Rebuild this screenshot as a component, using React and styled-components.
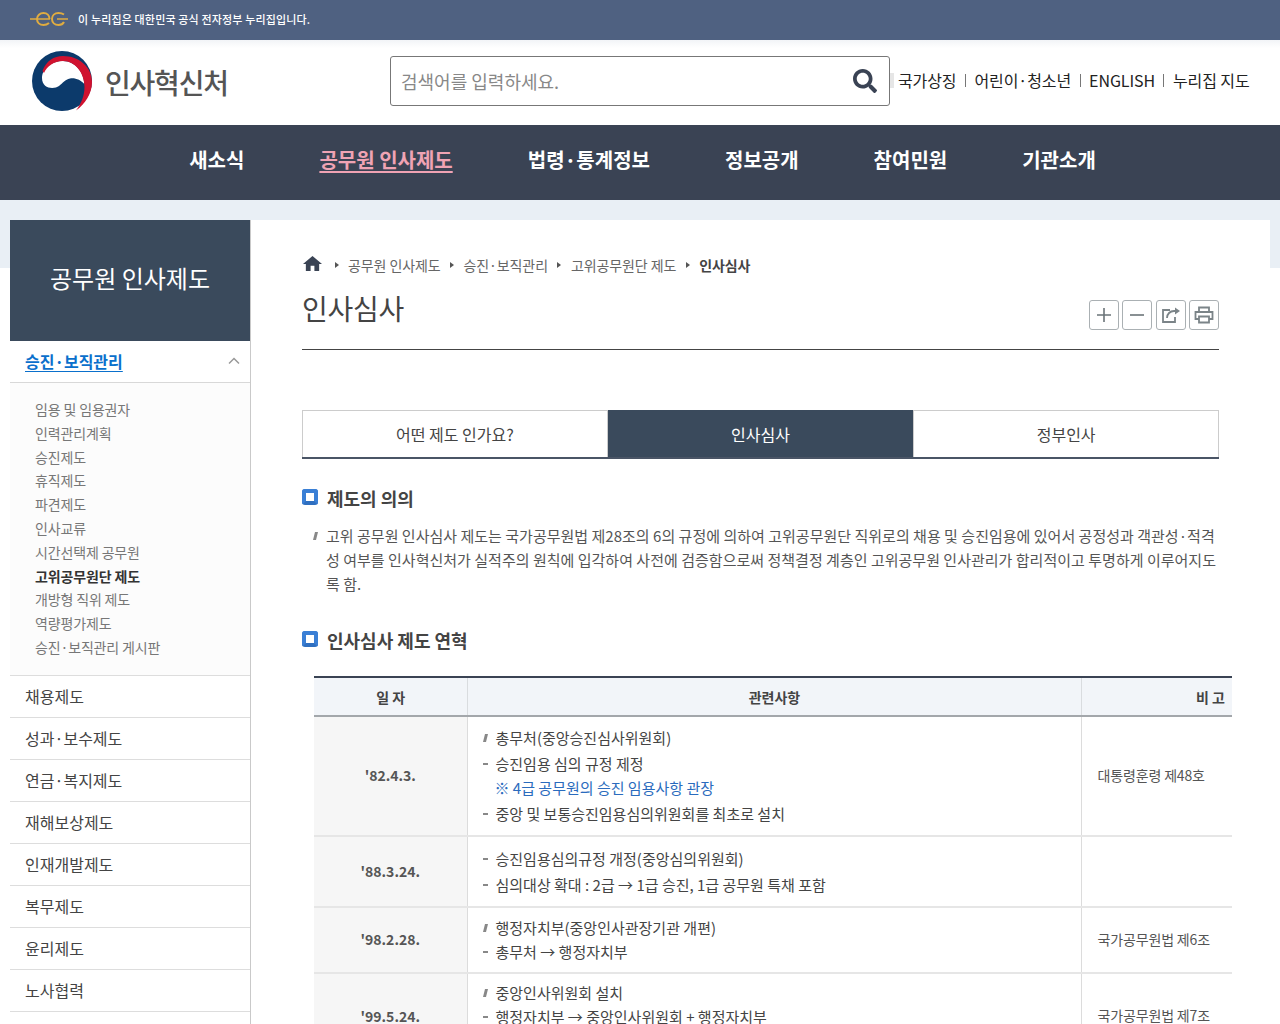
import React from "react";
import styled, { createGlobalStyle } from "styled-components";
import { FaSearch } from "react-icons/fa";

const Global = createGlobalStyle`
  html, body { margin: 0; padding: 0; background: #fff; }
  *, *::before, *::after { box-sizing: border-box; }
  body { font-family: "Noto Sans CJK KR", "Noto Sans", sans-serif; color: #444; overflow: hidden; }
  ul { list-style: none; margin: 0; padding: 0; }
`;

const Page = styled.div`width: 1280px; height: 1024px; overflow: hidden;`;
const TopBar = styled.div`
  height: 40px; background: #4f6181; display: flex; align-items: center; padding: 0 0 2px 30px; gap: 10px;
  color: #fff; font-size: 11px; font-weight: 500; letter-spacing: 0.15px;
`;
const Header = styled.header`
  height: 85px; display: flex; align-items: center; padding: 0 0 4px 32px;
  background: linear-gradient(#f2f4f7 0, #fff 8px);
`;
const Brand = styled.div`display: flex; align-items: center; gap: 13px; width: 358px; margin-top: 1px;`;
const BrandName = styled.span`font-size: 28px; font-weight: 500; color: #555; letter-spacing: -1.2px; line-height: 1; margin-top: 2px;`;
const Search = styled.div`
  width: 500px; height: 50px; border: 1px solid #777; border-radius: 3px; display: flex; align-items: center;
  justify-content: space-between; padding: 0 12px 0 10px; font-size: 18px; color: #888; background: #fff;
`;
const Ghost = styled.span`width: 4px; height: 15px; background: #e6e6e6; margin-right: 4px;`;
const Utility = styled.ul`display: flex; align-items: center; font-size: 16px; color: #222; margin-top: -1px;`;
const UtilItem = styled.li`
  display: flex; align-items: center; letter-spacing: -0.1px;
  & + &::before { content: ""; width: 1px; height: 13px; background: #777; margin: 0 8.5px; }
`;
const Nav = styled.nav`
  height: 75px; background: #3a4354; display: flex; align-items: center; justify-content: center; gap: 75px; padding: 0 0 7px 5px;
`;
const NavItem = styled.a`
  font-size: 20px; font-weight: 700; color: ${p => (p.$active ? "#f0a3b4" : "#fff")};
  text-decoration: ${p => (p.$active ? "underline" : "none")}; text-underline-offset: 3px;
`;
const Body = styled.div`
  display: flex; padding: 20px 10px 0; height: 824px;
  background: linear-gradient(#e9eff5 0, #e9eff5 68px, #fff 68px);
`;
const Side = styled.aside`width: 241px; border-right: 1px solid #c9c9c9; background: #fff; flex: none;`;
const SideTitle = styled.div`
  height: 121px; background: #3a4a5c; color: #fff; font-size: 24px; display: flex; align-items: center; justify-content: center; padding-bottom: 6px;
`;
const SideCurrent = styled.div`
  height: 42px; display: flex; align-items: center; justify-content: space-between; padding: 0 10px 2px 15px;
  border-bottom: 1px solid #d8d8d8; color: #0a70cc; font-weight: 700; font-size: 16px; text-decoration: underline;
  text-underline-offset: 3px;
`;
const SubList = styled.ul`background: #fcfcfc; padding: 15px 0 15px 25px; border-bottom: 1px solid #ddd;`;
const SubItem = styled.li`
  font-size: 14px; line-height: 23.8px; color: ${p => (p.$active ? "#333" : "#777")}; font-weight: ${p => (p.$active ? 700 : 400)}; letter-spacing: -0.15px;
`;
const SideRow = styled.div`
  height: 42px; border-bottom: 1px solid #ddd; display: flex; align-items: center; padding-left: 15px; font-size: 16px; color: #444;
`;
const Content = styled.main`width: 1019px; flex: none; background: #fff; padding: 31px 51px 0 51px;`;
const Crumbs = styled.div`display: flex; align-items: center; height: 28px; font-size: 14px; color: #666; letter-spacing: -0.1px;`;
const HomeIcon = styled.svg`width: 19px; height: 15px; fill: #3a4354; margin: -3px 3px 0 1px; flex: none;`;
const Crumb = styled.span`
  font-weight: ${p => (p.$last ? 700 : 400)}; color: ${p => (p.$last ? "#444" : "#666")};
`;
const Arrow = styled.i`
  width: 0; height: 0; border-left: 4px solid #555; border-top: 3px solid transparent; border-bottom: 3px solid transparent; margin: 0 9.5px;
`;
const TitleRow = styled.div`
  height: 71px; border-bottom: 1px solid #444; display: flex; justify-content: space-between; padding-top: 9px;
`;
const PageTitle = styled.h1`margin: 0; font-size: 28px; font-weight: 400; color: #444; line-height: 40px; letter-spacing: -0.3px;`;
const Tools = styled.div`display: flex; gap: 3.3px; margin-top: 12px;`;
const Tool = styled.button`
  width: 30px; height: 30px; padding: 0; border: 1px solid #aab0b3; border-radius: 3px; background: #fff; display: flex; align-items: center; justify-content: center;
`;
const Tabs = styled.div`display: grid; grid-template-columns: repeat(3, 1fr); margin-top: 60px; height: 49px; border-bottom: 2px solid #4a5566;`;
const Tab = styled.div`
  display: flex; align-items: center; justify-content: center; font-size: 16px;
  background: ${p => (p.$active ? "#3a4a5c" : "#fff")}; color: ${p => (p.$active ? "#fff" : "#444")};
  border: 1px solid ${p => (p.$active ? "#3a4a5c" : "#ccc")}; border-bottom: 0;
`;
const Heading = styled.h2`
  margin: ${p => p.$top}px 0 0; display: flex; align-items: center; gap: 9px; font-size: 18px; font-weight: 700; color: #444; line-height: 28px;
  &::before { content: ""; width: 16px; height: 16px; border: 4px solid #3a7fd5; border-bottom-color: #2f6fc0; border-radius: 3px; background: #fff; margin-top: -2px; }
`;
const Para = styled.p`
  margin: 12px 0 0; padding: 0 0 0 24px; font-size: 15px; line-height: 24px; color: #555; position: relative; width: 917px; letter-spacing: 0.015px;
  &::before { content: ""; position: absolute; left: 12px; top: 8px; width: 3px; height: 8px; background: #888; transform: skewX(-14deg); }
`;
const TableWrap = styled.div`margin: 22px 0 0 12px; width: 918px; overflow: hidden;`;
const Table = styled.table`width: 1025px; table-layout: fixed; border-collapse: collapse; border-top: 2px solid #3a4354;`;
const Th = styled.th`
  height: 39px; background: #f2f5f9; font-size: 14px; font-weight: 700; color: #444; border-bottom: 2px solid #a3a7ab; border-right: 1px solid #d9dcdf; padding: 0 0 0 1px;
`;
const Tr = styled.tr`height: ${p => p.$h}px; border-bottom: 2px solid #e6e6e6;`;
const DateCell = styled.td`
  background: #f6f6f6; text-align: center; font-size: 14px; font-weight: 700; color: #555; border-right: 1px solid #dcdcdc; padding: ${p => p.$pad || "0 0 2px"};
`;
const Detail = styled.td`
  border-right: 1px solid #dcdcdc; padding: ${p => p.$pad || 0}px 0 0 14px; vertical-align: ${p => (p.$pad ? "top" : "middle")};
`;
const Note = styled.td`font-size: 14px; color: #555; padding: 0 0 2px 16px; letter-spacing: -0.15px;`;
const Item = styled.li`
  position: relative; padding-left: 14px; font-size: 15px; line-height: 24px; color: #444; margin-top: ${p => p.$gap || 0}px;
  &::before {
    content: ""; position: absolute; left: 1px; background: #888;
    ${p => (p.$slash ? "top: 8px; width: 3px; height: 8px; left: 2px; transform: skewX(-14deg);" : "top: 11px; width: 5px; height: 2px;")}
  }
`;
const Remark = styled.div`padding-left: 13px; font-size: 15px; line-height: 24px; color: #2a6bbd;`;

const EgLogo = () => (
  <svg width="38" height="16" viewBox="0 0 38 16" fill="none" stroke="#e0ac40" strokeWidth="2">
    <path d="M0 8h20" strokeWidth="1.500" />
    <path d="M19.500 8c0-3.500-2.500-6-6-6s-6.500 2.500-6.500 6 2.700 6 6.500 6c2.200 0 4-.7 5.500-2" />
    <path d="M34 3.500C32.500 2.500 30.500 2 28.500 2c-3.800 0-6.500 2.500-6.500 6s2.700 6 6.500 6c2.500 0 4.500-1 5.500-3" />
    <path d="M27 8h11" strokeWidth="1.500" />
  </svg>
);
const GovLogo = () => (
  <svg width="60" height="60" viewBox="0 0 60 60">
    <circle cx="30" cy="30" r="30" fill="#0c3a6b" />
    <path d="M10 27C10 17 20 10 31 10c12 0 21 11 21.300 23C49 29 43 26.500 38 27.500c-5 1-7 4.500-11 7.500-5 3.500-17 3-17-8z" fill="#fff" />
    <path d="M10.500 20C14 10 22 5 31 5c16 0 29 11 29 26 0 12-7 22-16 28.500 5-6.500 8.500-14.500 8.500-23.500C52.500 22 43 10 31 10c-9 0-16 5-19 12z" fill="#d0122f" />
  </svg>
);

const sub = ["임용 및 임용권자", "인력관리계획", "승진제도", "휴직제도", "파견제도", "인사교류", "시간선택제 공무원", "고위공무원단 제도", "개방형 직위 제도", "역량평가제도", "승진·보직관리 게시판"];
const side = ["채용제도", "성과·보수제도", "연금·복지제도", "재해보상제도", "인재개발제도", "복무제도", "윤리제도", "노사협력"];

export default function App() {
  return (
    <Page>
      <Global />
      <TopBar><EgLogo /><span>이 누리집은 대한민국 공식 전자정부 누리집입니다.</span></TopBar>
      <Header>
        <Brand><GovLogo /><BrandName>인사혁신처</BrandName></Brand>
        <Search>
          <span>검색어를 입력하세요.</span>
          <FaSearch size={24} color="#3a4354" />
        </Search>
        <Ghost />
        <Utility>
          <UtilItem>국가상징</UtilItem>
          <UtilItem>어린이·청소년</UtilItem>
          <UtilItem>ENGLISH</UtilItem>
          <UtilItem>누리집 지도</UtilItem>
        </Utility>
      </Header>
      <Nav>
        <NavItem>새소식</NavItem>
        <NavItem $active>공무원 인사제도</NavItem>
        <NavItem>법령·통계정보</NavItem>
        <NavItem>정보공개</NavItem>
        <NavItem>참여민원</NavItem>
        <NavItem>기관소개</NavItem>
      </Nav>
      <Body>
        <Side>
          <SideTitle>공무원 인사제도</SideTitle>
          <SideCurrent>
            <span>승진·보직관리</span>
            <svg width="12" height="8" viewBox="0 0 12 8" fill="none" stroke="#999" strokeWidth="1.5"><path d="M1 6.500l5-5 5 5" /></svg>
          </SideCurrent>
          <SubList>
            {sub.map((s, i) => <SubItem key={s} $active={i === 7}>{s}</SubItem>)}
          </SubList>
          {side.map(s => <SideRow key={s}>{s}</SideRow>)}
        </Side>
        <Content>
          <Crumbs>
            <HomeIcon viewBox="2 3 20 17" preserveAspectRatio="none"><path d="M10 20v-6h4v6h5v-8h3L12 3 2 12h3v8z" /></HomeIcon>
            <Arrow /><Crumb>공무원 인사제도</Crumb>
            <Arrow /><Crumb>승진·보직관리</Crumb>
            <Arrow /><Crumb>고위공무원단 제도</Crumb>
            <Arrow /><Crumb $last>인사심사</Crumb>
          </Crumbs>
          <TitleRow>
            <PageTitle>인사심사</PageTitle>
            <Tools>
              <Tool><svg width="16" height="16" viewBox="0 0 16 16" stroke="#6b7478" strokeWidth="1.6"><path d="M8 1v14M1 8h14" /></svg></Tool>
              <Tool><svg width="16" height="16" viewBox="0 0 16 16" stroke="#6b7478" strokeWidth="1.6"><path d="M1 8h14" /></svg></Tool>
              <Tool><svg width="20" height="18" viewBox="0 0 20 18" fill="none" stroke="#7b8488" strokeWidth="1.8"><path d="M9 4H2v12h12v-5" /><path d="M6 12c0-4 3-7 7-7h3" /><path d="M14 1.500L19 5l-5 3.500z" fill="#7b8488" stroke="none" /></svg></Tool>
              <Tool><svg width="20" height="18" viewBox="0 0 20 18" fill="none" stroke="#7b8488" strokeWidth="1.8"><path d="M5 6V1.500h10V6" /><path d="M5 13H1.500V6h17v7H15" /><path d="M5 10.500h10v6H5z" /></svg></Tool>
            </Tools>
          </TitleRow>
          <Tabs>
            <Tab>어떤 제도 인가요?</Tab>
            <Tab $active>인사심사</Tab>
            <Tab>정부인사</Tab>
          </Tabs>
          <Heading $top={25}>제도의 의의</Heading>
          <Para>고위 공무원 인사심사 제도는 국가공무원법 제28조의 6의 규정에 의하여 고위공무원단 직위로의 채용 및 승진임용에 있어서 공정성과 객관성·적격성 여부를 인사혁신처가 실적주의 원칙에 입각하여 사전에 검증함으로써 정책결정 계층인 고위공무원 인사관리가 합리적이고 투명하게 이루어지도록 함.</Para>
          <Heading $top={30}>인사심사 제도 연혁</Heading>
          <TableWrap>
            <Table>
              <colgroup><col width="153" /><col width="614" /><col width="258" /></colgroup>
              <thead>
                <tr><Th>일 자</Th><Th>관련사항</Th><Th>비 고</Th></tr>
              </thead>
              <tbody>
                <Tr $h={120}>
                  <DateCell>'82.4.3.</DateCell>
                  <Detail><ul>
                    <Item $slash>총무처(중앙승진심사위원회)</Item>
                    <Item $gap={2}>승진임용 심의 규정 제정</Item>
                    <Remark>※ 4급 공무원의 승진 임용사항 관장</Remark>
                    <Item $gap={2}>중앙 및 보통승진임용심의위원회를 최초로 설치</Item>
                  </ul></Detail>
                  <Note>대통령훈령 제48호</Note>
                </Tr>
                <Tr $h={71}>
                  <DateCell>'88.3.24.</DateCell>
                  <Detail><ul>
                    <Item>승진임용심의규정 개정(중앙심의위원회)</Item>
                    <Item $gap={2}>심의대상 확대 : 2급 → 1급 승진, 1급 공무원 특채 포함</Item>
                  </ul></Detail>
                  <Note />
                </Tr>
                <Tr $h={66}>
                  <DateCell>'98.2.28.</DateCell>
                  <Detail><ul>
                    <Item $slash>행정자치부(중앙인사관장기관 개편)</Item>
                    <Item>총무처 → 행정자치부</Item>
                  </ul></Detail>
                  <Note>국가공무원법 제6조</Note>
                </Tr>
                <Tr $h={86}>
                  <DateCell $pad="0">'99.5.24.</DateCell>
                  <Detail $pad={7}><ul>
                    <Item $slash>중앙인사위원회 설치</Item>
                    <Item>행정자치부 → 중앙인사위원회 + 행정자치부</Item>
                  </ul></Detail>
                  <Note>국가공무원법 제7조</Note>
                </Tr>
              </tbody>
            </Table>
          </TableWrap>
        </Content>
      </Body>
    </Page>
  );
}
